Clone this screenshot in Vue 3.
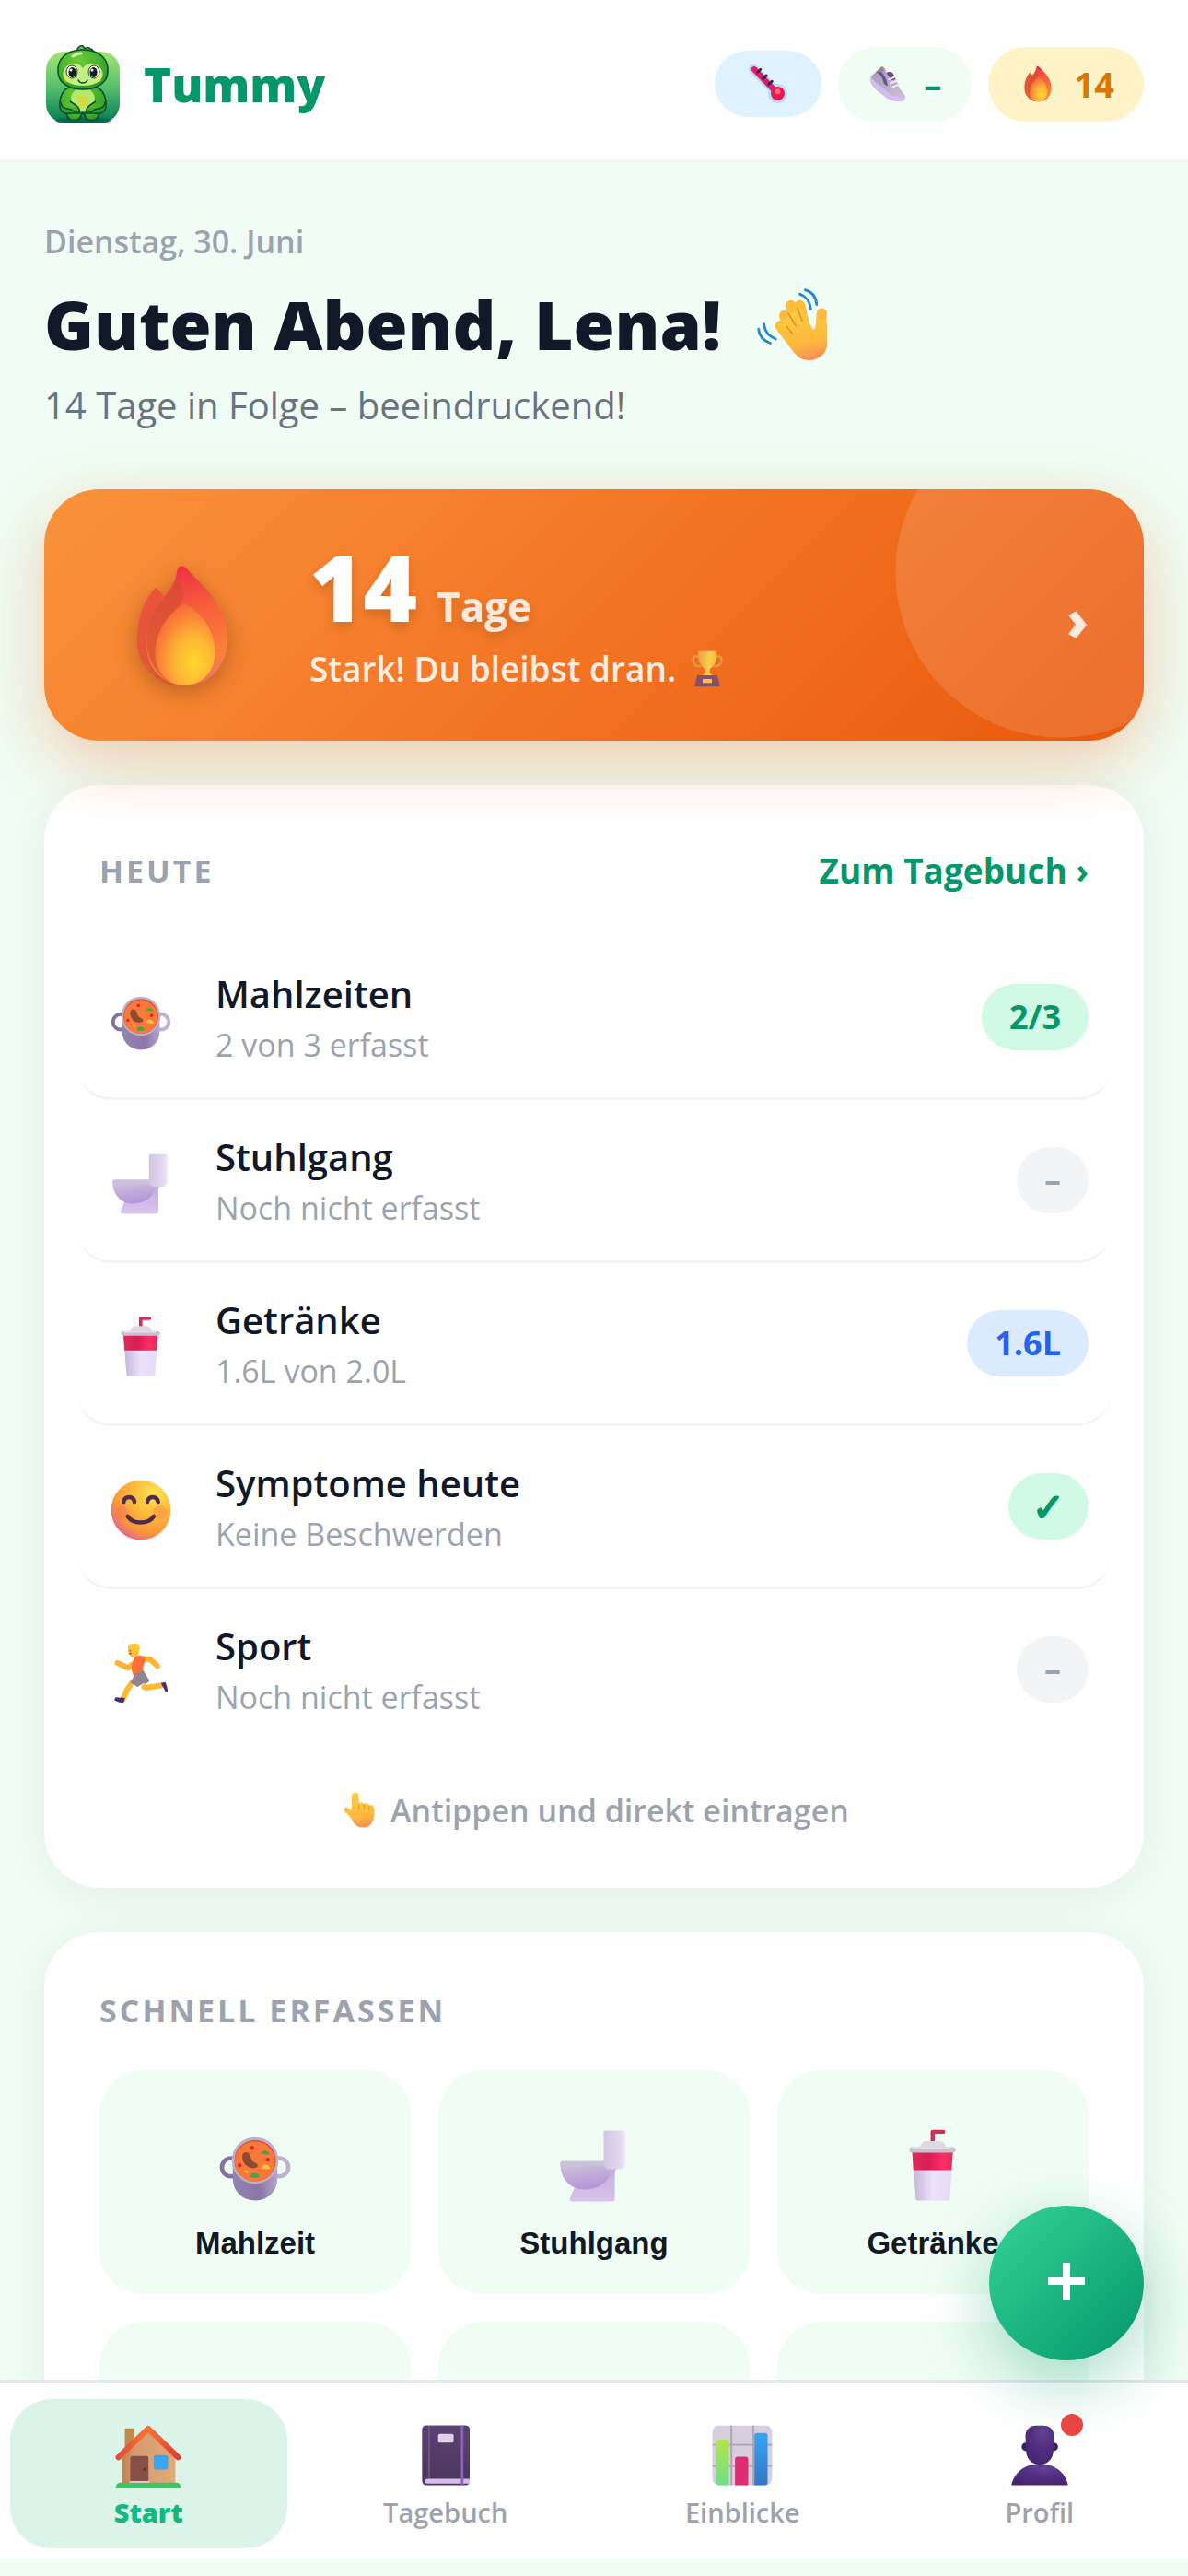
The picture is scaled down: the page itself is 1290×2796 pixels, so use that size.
<script setup>
import { ref } from 'vue'

const days = 14

const entries = [
  { icon: 'pot', title: 'Mahlzeiten', note: '2 von 3 erfasst', badge: '2/3', tone: 'good' },
  { icon: 'toilet', title: 'Stuhlgang', note: 'Noch nicht erfasst', badge: '–', tone: 'none' },
  { icon: 'cup', title: 'Getränke', note: '1.6L von 2.0L', badge: '1.6L', tone: 'info' },
  { icon: 'smile', title: 'Symptome heute', note: 'Keine Beschwerden', badge: '✓', tone: 'good check' },
  { icon: 'runner', title: 'Sport', note: 'Noch nicht erfasst', badge: '–', tone: 'none' },
]

const shortcuts = [
  { icon: 'pot', label: 'Mahlzeit' },
  { icon: 'toilet', label: 'Stuhlgang' },
  { icon: 'cup', label: 'Getränke' },
]
const moreShortcuts = [
  { icon: 'smile', label: 'Symptome' },
  { icon: 'runner', label: 'Sport' },
  { icon: 'book', label: 'Notiz' },
]

const tabs = [
  { icon: 'house', label: 'Start' },
  { icon: 'book', label: 'Tagebuch' },
  { icon: 'chart', label: 'Einblicke' },
  { icon: 'person', label: 'Profil', dot: true },
]
const active = ref('Start')
</script>

<template>
  <div class="app">
    <svg class="sprite" aria-hidden="true">
      <defs>
        <linearGradient id="g-logo" x1="0" y1="0" x2="0" y2="1"><stop offset="0" stop-color="#a4e676" /><stop offset=".5" stop-color="#57c06c" /><stop offset="1" stop-color="#047a55" /></linearGradient>
        <radialGradient id="g-mascot" cx=".4" cy=".25" r=".8"><stop offset="0" stop-color="#6ccb35" /><stop offset="1" stop-color="#279a26" /></radialGradient>
        <linearGradient id="g-flame" x1=".4" y1="0" x2=".6" y2="1"><stop offset="0" stop-color="#ef2f45" /><stop offset=".4" stop-color="#f8603c" /><stop offset=".8" stop-color="#f98238" /><stop offset="1" stop-color="#f2716a" /></linearGradient>
        <linearGradient id="g-tongue" x1="0" y1="0" x2="1" y2="1"><stop offset="0" stop-color="#f0503f" /><stop offset=".6" stop-color="#dc5a33" /><stop offset="1" stop-color="#d64a3c" /></linearGradient>
        <radialGradient id="g-core" cx=".65" cy=".72" r=".75"><stop offset="0" stop-color="#ffd62e" /><stop offset=".4" stop-color="#fdb833" /><stop offset="1" stop-color="#f7643a" /></radialGradient>
        <linearGradient id="g-skin" x1=".3" y1="0" x2=".5" y2="1"><stop offset="0" stop-color="#ffcf3d" /><stop offset=".7" stop-color="#fdb83e" /><stop offset="1" stop-color="#f79256" /></linearGradient>
        <radialGradient id="g-face" cx=".72" cy=".22" r=".85"><stop offset="0" stop-color="#ffe250" /><stop offset=".45" stop-color="#fdb83c" /><stop offset=".8" stop-color="#f8953b" /><stop offset="1" stop-color="#e8668d" /></radialGradient>
        <linearGradient id="g-pot"><stop offset="0" stop-color="#9384b0" /><stop offset=".6" stop-color="#8a76a8" /><stop offset="1" stop-color="#b5a6ca" /></linearGradient>
        <linearGradient id="g-tank"><stop offset="0" stop-color="#d3c6e4" /><stop offset=".6" stop-color="#dfd3ec" /><stop offset="1" stop-color="#efe7f7" /></linearGradient>
        <linearGradient id="g-bowl" x1="0" y1="0" x2=".3" y2="1"><stop offset="0" stop-color="#d2c8dd" /><stop offset="1" stop-color="#b497d8" /></linearGradient>
        <linearGradient id="g-base" x1="0" y1="0" x2="0" y2="1"><stop offset="0" stop-color="#c3acdf" /><stop offset="1" stop-color="#d8c4ec" /></linearGradient>
        <linearGradient id="g-cup"><stop offset="0" stop-color="#c3b3d8" /><stop offset=".5" stop-color="#ece2fa" /><stop offset="1" stop-color="#e6d9f6" /></linearGradient>
        <linearGradient id="g-band"><stop offset="0" stop-color="#dd2c5c" /><stop offset=".4" stop-color="#d81e53" /><stop offset=".75" stop-color="#fb2f65" /><stop offset="1" stop-color="#e42a5b" /></linearGradient>
        <linearGradient id="g-gold"><stop offset="0" stop-color="#eb9c45" /><stop offset=".6" stop-color="#fbd14d" /><stop offset="1" stop-color="#f4b63f" /></linearGradient>
        <linearGradient id="g-wall"><stop offset="0" stop-color="#bd8350" /><stop offset=".25" stop-color="#d79a70" /><stop offset="1" stop-color="#e0ac76" /></linearGradient>
        <linearGradient id="g-roof"><stop offset="0" stop-color="#e84a34" /><stop offset=".5" stop-color="#fb7432" /><stop offset="1" stop-color="#dd3d33" /></linearGradient>
        <linearGradient id="g-book" x1="0" y1="0" x2="0" y2="1"><stop offset="0" stop-color="#5b4273" /><stop offset="1" stop-color="#4b375c" /></linearGradient>
        <linearGradient id="g-b1" x1="0" y1="0" x2="0" y2="1"><stop offset="0" stop-color="#b5e34d" /><stop offset="1" stop-color="#6be08b" /></linearGradient>
        <linearGradient id="g-b3" x1="0" y1="0" x2="0" y2="1"><stop offset="0" stop-color="#35a5f4" /><stop offset="1" stop-color="#3576c4" /></linearGradient>
        <radialGradient id="g-person" cx=".6" cy=".2" r=".9"><stop offset="0" stop-color="#664393" /><stop offset=".4" stop-color="#533083" /><stop offset="1" stop-color="#42236b" /></radialGradient>
        <linearGradient id="g-shoe" x1="0" y1="0" x2="1" y2="1"><stop offset="0" stop-color="#a698b5" /><stop offset="1" stop-color="#cabfd8" /></linearGradient>
      </defs>

      <symbol id="i-logo" viewBox="0 0 84 84">
        <rect x="2" y="7" width="80" height="77" rx="20" fill="url(#g-logo)" />
        <ellipse cx="42" cy="82" rx="30" ry="4" fill="#036047" opacity=".7" />
        <g stroke="#0b4d2e" stroke-width="1.6" fill="url(#g-mascot)" stroke-linejoin="round">
          <path d="M35 8C35 3 39 0 42 1c1 1 2 2 2 3 2-2 5-2 6 0 3 0 4 3 2 6z" />
          <path d="M26 66c-3 6-2 13 3 15 4 1 9 1 10-3l3-5 3 5c1 4 6 4 10 3 5-2 6-9 3-15z" />
          <path d="M27 46c-7 2-11 12-10 21 1 7 7 8 12 7h26c5 1 11 0 12-7 1-9-3-19-10-21z" />
          <ellipse cx="42" cy="59" rx="13" ry="13" fill="#b4e86e" stroke="none" />
          <path d="M18 62c1 8 6 6 11 8 3 2 5 4 9 3 1-3-1-6-4-8l-6-4M66 62c-1 8-6 6-11 8-3 2-5 4-9 3-1-3 1-6 4-8l6-4" />
          <path d="M42 5C24 5 14 15 15 29c0 11 11 19 27 19s27-8 27-19C70 15 60 5 42 5z" />
        </g>
        <path d="M42 25c-3-5-9-6-14-4-6 2-9 9-7 14 3 6 11 9 21 9s18-3 21-9c2-5-1-12-7-14-5-2-11-1-14 4z" fill="#c2ee84" />
        <ellipse cx="30" cy="29" rx="6" ry="7" fill="#fff" stroke="#20432c" /><ellipse cx="54" cy="29" rx="6" ry="7" fill="#fff" stroke="#20432c" />
        <ellipse cx="30.500" cy="29.500" rx="4" ry="5.500" fill="#10201c" /><ellipse cx="53.500" cy="29.500" rx="4" ry="5.500" fill="#10201c" />
        <circle cx="29" cy="27" r="1.500" fill="#fff" /><circle cx="52" cy="27" r="1.500" fill="#fff" />
        <path d="M37 38c2 4 8 4 10 0" fill="none" stroke="#174a26" stroke-width="1.500" stroke-linecap="round" />
        <circle cx="25" cy="37" r="3" fill="#f3e24b" opacity=".6" /><circle cx="59" cy="37" r="3" fill="#f3e24b" opacity=".6" />
        <path d="M37 57h10M38 61h9M37 65h10" stroke="#e3d72c" stroke-width="2.500" stroke-linecap="round" />
        <path d="M31 12c3-2 6-3 9-3" stroke="#d9f7a8" stroke-width="3" stroke-linecap="round" fill="none" />
      </symbol>

      <symbol id="i-thermo" viewBox="0 0 32 32">
        <path d="M5.500 5.500L23 23" stroke="#b9d8fb" stroke-width="7" stroke-linecap="round" /><circle cx="23" cy="23" r="7" fill="#b9d8fb" />
        <path d="M6 5.500L22 22" stroke="#dd1c63" stroke-width="4.200" stroke-linecap="round" /><circle cx="23" cy="23" r="5" fill="#e8184f" /><circle cx="23" cy="21.500" r="2" fill="#fb6a7c" />
        <path d="M8.500 7.500l2-2M12.500 12l2.300-2M16.500 16.200l2.300-2" stroke="#37264b" stroke-width="2" stroke-linecap="round" />
      </symbol>

      <symbol id="i-shoe" viewBox="0 0 32 32">
        <path d="M11.500 2.300L2 11c-.5 4 3 8 7 11.500 6 4.500 9 7.500 15 7.500 4 0 6-1 6-3.500z" fill="#d3bdf0" />
        <path d="M11.500 2.300L3 10c1 4 6 6 10 10 5 5 9 7 17 6.500-1-3.500-4-5-5.500-8.500L21 9c-2-3-4-3-6-1.500-1-2-1-5-3.500-5.200z" fill="url(#g-shoe)" />
        <path d="M7 7c3 1 5 4 6 9l3 2C15.500 12 13 8 9 5z" fill="#6b5590" /><path d="M11.500 2.300L6 7l3.500-.5L13 6z" fill="#8a8a8e" />
        <path d="M15 7.500c2-2 5-1 6 2l1 3-3 .5z" fill="#644c8c" />
        <path d="M17 12.500l5-2M18 15.500l5-2M20 18.500l5-2" stroke="#f4eefb" stroke-width="1.300" stroke-linecap="round" />
      </symbol>

      <symbol id="i-flame" viewBox="0 0 32 32">
        <path d="M9.700 7.100C6.500 10.500 5.400 15 5.400 19.500 5.500 25 9 29 14 30l4-14-5.500-5c-.6-1.500-1.500-3-2.800-3.900z" fill="url(#g-tongue)" />
        <path d="M15.800 2c-.9 0-1 .8-1.200 2C14 8 9 11 7.700 17.500 6.600 24 10 29.800 16.400 30c6.200 0 10.200-4.500 10.200-11C26.600 11 20 6 17 2.600 16.600 2.200 16.200 2 15.800 2z" fill="url(#g-flame)" />
        <path d="M14.600 5C13 9 8.500 12 7.700 18c-.6 5 2 9.500 5.600 11.300C9.500 24 9.600 19 12 15.500c1.200-2 3-3.500 4-5.500C17 8 15.500 6 14.600 5z" fill="#cf4f31" opacity=".65" />
        <path d="M16.500 10.800C13.500 12.500 9.600 17 9.600 22.500c0 4.500 3 7.500 6.900 7.500s7.200-3 7.200-7.600c0-5-3-9.400-7.200-11.600z" fill="url(#g-core)" />
      </symbol>

      <symbol id="i-wave" viewBox="0 0 32 32">
        <g fill="none" stroke-linecap="round" stroke-width="4.200">
          <path d="M17 18L15 8.500M20.500 17L18.500 8.500M16 21l-3.500-8.500M17 24l-6-7.500" stroke="#fcbd3c" /><path d="M26.500 20l.6-8.500" stroke="#fdb93d" stroke-width="4" />
        </g>
        <path d="M13.600 12.500L19 9.500l4.500 8c.3.500.8.200 1-.4l.8-3.500c2 .5 3.900 1 3.900 2v8c0 3.500-3.300 6.200-7 6.200-3.300 0-5-1.600-7-4.400L9.500 18z" fill="url(#g-skin)" />
        <path d="M13.200 16.500l2.400 3M14 11.500l3 5M17.500 9.500l2 5" stroke="#e3942e" stroke-width=".6" stroke-linecap="round" fill="none" />
        <path d="M18.500 4c2.300.8 4 3 4.300 5.800M20.600 2.400c2.700.8 4.300 3 4.500 5.700M4.500 15.700c.3 2.900 2 4.900 4.600 5.900M2.400 17.700c.3 2.600 2 4.600 4.600 5.500" fill="none" stroke="#2489cf" stroke-width="1" stroke-linecap="round" />
      </symbol>

      <symbol id="i-trophy" viewBox="0 0 32 32">
        <path d="M9 6.500c-5-2-5 4-2.500 6.500C8 14 10 14 11 14M23 6.500c5-2 5 4 2.500 6.500C24 14 22 14 21 14" fill="none" stroke="#e39a3d" stroke-width="1.800" />
        <path d="M8.700 2h14.800c.5 6-1 11-5.500 14l-.3 3 2.800 2.600h-9L14.400 19l-.3-3C9.600 13 8.200 8 8.700 2z" fill="url(#g-gold)" />
        <path d="M8 21h16l2 9H6z" fill="#84506e" /><rect x="12.300" y="24" width="7.400" height="3" rx=".5" fill="#f7c251" />
      </symbol>

      <symbol id="i-pot" viewBox="0 0 32 32">
        <circle cx="6.500" cy="16.500" r="3.600" fill="none" stroke="#8273a3" stroke-width="1.700" /><circle cx="25.500" cy="16.500" r="3.600" fill="none" stroke="#bdb3ca" stroke-width="1.700" />
        <path d="M7.200 14h17.600v7c0 5-3.800 8.600-8.800 8.600S7.200 26 7.200 21z" fill="url(#g-pot)" />
        <circle cx="16" cy="13.800" r="9.200" fill="#bdb0ca" /><circle cx="16" cy="13.900" r="8.200" fill="#dc5439" /><circle cx="15.900" cy="14.200" r="7.900" fill="#fb7938" />
        <path d="M12 10.600c2-.2 2.100 1.600 2.700 3 .8 1.300 2.700 1.200 2.300 2.500-.8 1.300-3.800.8-5-.8-1.300-1.800-1.500-4.400 0-4.700z" fill="#8d4a31" />
        <path d="M16.200 10.900l2 .2c.4-1.500 3-1.700 3.600.4zM14 20.200c.2-2 3.500-2 3.700 0-.8.700-3 .7-3.700 0z" fill="#49a34d" />
        <path d="M18.500 17c0-2.300 3.200-2 3.500.3zM11.500 18l1.700-.2v1.300z" fill="#fcc63b" />
        <circle cx="14.800" cy="8.800" r=".8" fill="#cf2f2c" /><circle cx="21" cy="13.500" r=".8" fill="#cf2f2c" /><circle cx="9.900" cy="15.700" r=".8" fill="#cf2f2c" />
      </symbol>

      <symbol id="i-toilet" viewBox="0 0 32 32">
        <path d="M8.500 24l11-8h6.500c-1.500 1-1.800 2-1.800 3.500V29c0 .6-.4 1-1 1H7.400c-.8 0-1.200-.8-.8-1.500z" fill="url(#g-base)" />
        <path d="M2.700 15.200c0-.7.400-1.100 1-1.100H20l3 4c-1.500 4.500-5.500 7.200-10.500 7.200-5.600 0-9.800-4-9.800-10.100z" fill="url(#g-bowl)" />
        <path d="M3.500 14.100H20v2H2.900c-.5-1-.2-2 .6-2z" fill="#cbc1d8" />
        <path d="M19.800 2.700c0-.4.300-.7.700-.7h7.300c.4 0 .7.300.7.700v12c0 1.600-1 2.600-2.500 2.600h-3.700c-1.500 0-2.500-1-2.500-2.500z" fill="url(#g-tank)" />
      </symbol>

      <symbol id="i-cup" viewBox="0 0 32 32">
        <path d="M15.900 8V2.500h4.200" fill="none" stroke="#d22d55" stroke-width="1.600" stroke-linejoin="round" stroke-linecap="round" />
        <path d="M7.800 10h16.100l-1.200 18.800c0 .5-.4.800-.8.800H10c-.5 0-.8-.3-.8-.8z" fill="url(#g-cup)" />
        <path d="M7.800 10.300h16.100l-.5 7.300H8.300z" fill="url(#g-band)" />
        <path d="M10.800 9c.3-1.800 1.300-2.700 2.700-2.800h5c1.400.1 2.400 1 2.700 2.800z" fill="#dedbe0" />
        <rect x="6.700" y="8.500" width="18.300" height="2.200" rx="1.100" fill="#c9c1ce" /><path d="M8 8.900h15" stroke="#e4e1e6" stroke-width=".8" />
      </symbol>

      <symbol id="i-smile" viewBox="0 0 32 32">
        <circle cx="16" cy="16" r="14" fill="url(#g-face)" />
        <circle cx="6.800" cy="17" r="3.200" fill="#f56f5e" opacity=".4" /><circle cx="25" cy="17" r="3.200" fill="#f88a50" opacity=".5" />
        <path d="M7.900 12.200c.6-3 4.500-3 5.100 0M19 12.200c.6-3 4.500-3 5.100 0M9.800 19c2.600 3.800 9.600 3.800 12.200 0" fill="none" stroke="#4d2c4a" stroke-width="1.900" stroke-linecap="round" />
      </symbol>

      <symbol id="i-runner" viewBox="0 0 32 32">
        <path d="M11.800 20.500l-2.200 3.200-2 4.500M17.500 22.500c2 1 4.500-.6 8-.7" stroke="#fdb92f" stroke-width="2.600" stroke-linecap="round" stroke-linejoin="round" fill="none" />
        <path d="M4 27.300l4.600.4-.8 2.300c-1.500 0-3-.6-4.300-1.200zM25.400 20.600l2-.4c.8 1.300 1.100 3 1.200 4.600l-1 .1z" fill="#47317c" />
        <path d="M12.500 11.500l-2.500 2L5 11.200M17.500 9.200l3 .4 3.200 3" stroke="#fdb433" stroke-width="2.600" stroke-linecap="round" stroke-linejoin="round" fill="none" />
        <path d="M13 8.500c1.500-1.200 4-1 5 .5.500 1-1.300 3-1 7L13 18c-1-2-1.800-4-1.300-6z" fill="#fb7138" />
        <path d="M17 14.500l3 5c-.5 1.300-1.700 1.700-2.900 1.400L14.500 22.500l-3.400-2 1.700-3.500z" fill="#8e8494" />
        <path d="M10 3.500c.5-1.800 5-2 5.300 0 .2 2.500-.3 4.500-2.500 5-2 0-2.800-1.500-2.900-3z" fill="#fcc037" /><path d="M10 4c1-2.300 5-2.500 5.300 0 0 1 0 2-.5 3-1-2-2-3-4.800-3z" fill="#fdcc3a" /><path d="M10.500 6.800h1M10.600 5.500h.6" stroke="#a5513a" stroke-width=".6" />
      </symbol>

      <symbol id="i-point" viewBox="0 0 32 32">
        <path d="M10 4.500c0-3.400 5.800-3.400 5.800 0v6.300c1.500-1.500 3.600-1 4.200.3 1.500-1 3.300-.4 4 .9 2-.8 4 .6 4 3 0 8-1.500 14.500-9 14.500-5 0-7.500-3.500-9.500-7.500L4.400 16.500c-1-1.600.5-3.300 2.200-2.700L10 16z" fill="url(#g-skin)" />
        <path d="M15.800 11v4M20 11.500V15M24 12.500v3" stroke="#e39a2e" stroke-width=".8" stroke-linecap="round" />
      </symbol>

      <symbol id="i-house" viewBox="0 0 32 32">
        <rect x="5" y="3.300" width="4.400" height="10" rx=".4" fill="#c08a4a" />
        <path d="M3.700 15L16 5l12.700 10v14H3.700z" fill="url(#g-wall)" />
        <rect x="7.500" y="16.300" width="8.600" height="12.200" rx="1" fill="#855048" /><circle cx="14.200" cy="22.600" r=".7" fill="#5d3530" />
        <rect x="18.500" y="15.900" width="6.800" height="6.800" rx="1.200" fill="#37a5ef" />
        <path d="M2 17L16 3.500 30 17" fill="none" stroke="url(#g-roof)" stroke-width="2.700" stroke-linecap="round" stroke-linejoin="round" />
        <path d="M.7 31.400c0-1.600.9-2.500 2.300-2.500h26c1.400 0 2.300.9 2.300 2.500z" fill="#40c565" /><path d="M7.300 28.500h9.400" stroke="#d9cbd8" stroke-width=".8" />
      </symbol>

      <symbol id="i-book" viewBox="0 0 32 32">
        <rect x="5" y="2" width="22.200" height="28" rx="1.800" fill="#4b2f71" />
        <path d="M6.800 2h18.600c1 0 1.800.8 1.800 1.800V27H7c-1 0-2 .8-2 1.800v-25C5 2.800 5.800 2 6.800 2z" fill="url(#g-book)" />
        <path d="M27.200 27H7.500c-2 0-2 2.300 0 2.300h19.700z" fill="#d3bfe6" /><path d="M8.200 2.200v24.500" stroke="#7b668c" stroke-width=".5" />
        <rect x="12.400" y="5.900" width="7.300" height="4.200" rx=".8" fill="#e0d0ea" /><path d="M23.700 2v28" stroke="#8766b6" stroke-width="1.200" />
      </symbol>

      <symbol id="i-chart" viewBox="0 0 32 32">
        <rect x="2" y="2" width="28" height="28" rx="3" fill="#d6cfdd" />
        <path d="M10.900 2v28M21.200 2v28M2 11.100h28M2 21h28" stroke="#aba3b4" stroke-width=".8" />
        <path d="M3.600 10c0-.8.500-1.300 1.200-1.300h3.700c.8 0 1.200.5 1.200 1.300v20H5c-.8-.1-1.400-.6-1.400-1.200z" fill="url(#g-b1)" />
        <path d="M12.600 18c0-.8.500-1.300 1.200-1.300h3.800c.8 0 1.200.5 1.200 1.300v12h-6.200z" fill="#de2b71" />
        <path d="M21.700 6.800c0-.8.500-1.300 1.200-1.300h3.800c.8 0 1.200.5 1.200 1.300V29c0 .6-.5 1-1.200 1h-5z" fill="url(#g-b3)" />
      </symbol>

      <symbol id="i-person" viewBox="0 0 32 32">
        <circle cx="9.500" cy="12" r="2" fill="#3b2162" /><circle cx="22.600" cy="12" r="2" fill="#3b2162" />
        <path d="M2.700 30C4 24 9 20 16 20s12 4 13.300 10z" fill="url(#g-person)" />
        <path d="M9.300 7c0-3 2-5 5-5h3.400c3 0 5 2 5 5l-.3 7c-.2 4-3 6.300-6.400 6.300S9.800 18 9.600 14z" fill="url(#g-person)" />
      </symbol>
    </svg>

    <header class="topbar">
      <div class="brand">
        <svg class="logo" aria-hidden="true"><use href="#i-logo" /></svg>
        <span class="brand-name">Tummy</span>
      </div>
      <div class="chips">
        <button class="chip chip-temp" type="button" aria-label="Temperatur"><svg class="ico-temp" aria-hidden="true"><use href="#i-thermo" /></svg></button>
        <button class="chip chip-steps" type="button"><svg class="ico-sm" aria-hidden="true"><use href="#i-shoe" /></svg><span>–</span></button>
        <button class="chip chip-streak" type="button"><svg class="ico-sm" aria-hidden="true"><use href="#i-flame" /></svg><span>{{ days }}</span></button>
      </div>
    </header>

    <main class="content">
      <section class="greeting">
        <p class="date">Dienstag, 30. Juni</p>
        <h1 class="hello">Guten Abend, Lena! <svg class="ico-wave" aria-hidden="true"><use href="#i-wave" /></svg></h1>
        <p class="lead">{{ days }} Tage in Folge – beeindruckend!</p>
      </section>

      <a class="streak" href="#streak">
        <span class="streak-icon"><svg class="ico-xl" aria-hidden="true"><use href="#i-flame" /></svg></span>
        <span class="streak-body">
          <span class="streak-count"><strong>{{ days }}</strong><span class="unit">Tage</span></span>
          <span class="streak-note">Stark! Du bleibst dran. <svg class="ico-sm" aria-hidden="true"><use href="#i-trophy" /></svg></span>
        </span>
        <span class="streak-arrow">›</span>
      </a>

      <section class="card">
        <div class="card-head">
          <h2 class="card-title">HEUTE</h2>
          <a class="card-link" href="#tagebuch">Zum Tagebuch ›</a>
        </div>
        <ul class="rows">
          <li v-for="e in entries" :key="e.title">
            <button class="row" type="button">
              <span class="row-icon"><svg class="ico-md" aria-hidden="true"><use :href="'#i-' + e.icon" /></svg></span>
              <span class="row-text"><span class="row-title">{{ e.title }}</span><span class="row-note">{{ e.note }}</span></span>
              <span class="badge" :class="e.tone">{{ e.badge }}</span>
            </button>
          </li>
        </ul>
        <p class="hint"><svg class="ico-sm" aria-hidden="true"><use href="#i-point" /></svg>Antippen und direkt eintragen</p>
      </section>

      <section class="card">
        <div class="card-head"><h2 class="card-title">SCHNELL ERFASSEN</h2></div>
        <div class="tiles">
          <button v-for="s in shortcuts" :key="s.label" class="tile" type="button">
            <svg class="ico-lg" aria-hidden="true"><use :href="'#i-' + s.icon" /></svg>
            <span>{{ s.label }}</span>
          </button>
          <button v-for="s in moreShortcuts" :key="s.label" class="tile" type="button" :aria-label="s.label">
            <svg class="ico-lg" aria-hidden="true"><use :href="'#i-' + s.icon" /></svg>
          </button>
        </div>
      </section>
    </main>

    <nav class="tabbar">
      <button v-for="t in tabs" :key="t.label" class="tab" :class="{ active: active === t.label }" type="button" @click="active = t.label">
        <span class="tab-icon"><svg class="ico-md" aria-hidden="true"><use :href="'#i-' + t.icon" /></svg><span v-if="t.dot" class="dot"></span></span>
        <span class="tab-label">{{ t.label }}</span>
      </button>
    </nav>

    <button class="fab" type="button" aria-label="Neuer Eintrag">
      <svg class="plus" viewBox="0 0 40 40" aria-hidden="true"><path d="M20 0v40M0 20h40" stroke="#fff" stroke-width="8" /></svg>
    </button>
  </div>
</template>

<style>
body { background: #f0fdf4; }
</style>

<style scoped>
* { box-sizing: border-box; }
.app {
  height: 100vh;
  display: flex;
  flex-direction: column;
  padding-bottom: 18px;
  background: #f0fdf4;
  color: #111827;
  font-family: "Open Sans", "Noto Sans", sans-serif;
}
.sprite { position: absolute; width: 0; height: 0; }
p, h1, h2, ul { margin: 0; padding: 0; }
ul { list-style: none; }
button { border: 0; background: none; padding: 0; color: inherit; font: inherit; }
a { text-decoration: none; }
svg { display: block; flex: none; }
.ico-sm { width: 44px; height: 44px; }
.ico-temp { width: 48px; height: 48px; }
.ico-md { width: 74px; height: 74px; }
.ico-lg { width: 88px; height: 88px; }
.ico-xl { width: 148px; height: 148px; filter: drop-shadow(0 6px 12px rgba(0, 0, 0, .25)); }
.ico-wave { width: 89px; height: 89px; }

.topbar {
  flex: none;
  display: flex;
  align-items: center;
  justify-content: space-between;
  height: 176px;
  padding: 9px 48px 0;
  background: #fff;
  border-bottom: 3px solid #f1f7f4;
}
.brand { display: flex; align-items: center; gap: 24px; }
.logo { width: 84px; height: 84px; }
.brand-name { font-size: 51px; line-height: 72px; font-weight: 800; color: #059669; }
.chips { display: flex; align-items: center; gap: 18px; }
.chip { display: flex; align-items: center; height: 81px; border-radius: 42px; font-size: 38px; font-weight: 700; }
.chip-temp { height: 72px; padding: 0 34px; background: #e0f2fe; }
.chip-steps { gap: 18px; padding: 0 32px; background: #f0fdf4; color: #059669; }
.chip-streak { gap: 18px; padding: 0 32px; background: #fef3c7; color: #d97706; }

.content { flex: 1; min-height: 0; overflow: hidden; padding: 62px 48px 0; }
.date { font-size: 34px; line-height: 48px; font-weight: 600; color: #9ca3af; }
.hello { display: flex; align-items: center; gap: 34px; margin-top: 18px; font-size: 73px; line-height: 96px; font-weight: 800; }
.lead { margin-top: 10px; font-size: 40px; line-height: 60px; color: #6b7280; }

.streak {
  position: relative;
  z-index: 1;
  display: flex;
  align-items: center;
  gap: 48px;
  margin-top: 61px;
  padding: 51px 60px;
  border-radius: 60px;
  background: linear-gradient(135deg, #fb923c, #ea580c);
  box-shadow: 0 24px 72px rgba(234, 88, 12, .3);
  color: #fff;
}
.streak::before {
  content: "";
  position: absolute;
  inset: 0;
  border-radius: 60px;
  background: radial-gradient(circle 180px at calc(100% - 90px) 90px, rgba(255, 255, 255, .13) 179px, transparent 180px);
}
.streak-icon { display: flex; justify-content: center; align-self: flex-end; width: 180px; }
.streak-body { flex: 1; display: flex; flex-direction: column; gap: 9px; }
.streak-count { display: flex; align-items: baseline; gap: 21px; text-shadow: 0 6px 12px rgba(0, 0, 0, .15); }
.streak-count strong { font-size: 100px; line-height: 108px; font-weight: 800; }
.unit { font-size: 44px; line-height: 60px; font-weight: 700; color: rgba(255, 255, 255, .87); }
.streak-note { display: flex; align-items: center; gap: 12px; font-size: 37px; line-height: 54px; font-weight: 600; color: rgba(255, 255, 255, .9); }
.streak-arrow { padding-top: 9px; font-size: 60px; line-height: 72px; font-weight: 800; color: rgba(255, 255, 255, .85); }

.card { margin-top: 48px; padding: 60px; border-radius: 60px; background: #fff; box-shadow: 0 6px 48px rgba(0, 0, 0, .06); }
.card-head { display: flex; align-items: center; justify-content: space-between; margin-bottom: 39px; }
.card-title { font-size: 34px; line-height: 51px; font-weight: 700; letter-spacing: 3px; color: #9ca3af; }
.card-link { font-size: 37px; line-height: 66px; font-weight: 700; color: #059669; }
.row {
  display: flex;
  align-items: center;
  gap: 36px;
  width: calc(100% + 48px);
  margin: 0 -24px;
  padding: 33px 24px;
  border-bottom: 3px solid #f3f4f6;
  border-radius: 36px;
  text-align: left;
}
li:last-child .row { border-bottom: 0; }
.row-icon { display: flex; justify-content: center; width: 90px; padding-top: 8px; }
.row-text { flex: 1; display: flex; flex-direction: column; gap: 3px; }
.row-title { font-size: 40px; line-height: 57px; font-weight: 600; }
.row-note { font-size: 34px; line-height: 48px; color: #9ca3af; }
.badge { height: 72px; padding: 0 30px; border-radius: 36px; font-size: 36px; line-height: 72px; font-weight: 700; font-family: "Open Sans", "DejaVu Sans", sans-serif; }
.good { background: #d1fae5; color: #059669; }
.none { background: #f3f4f6; color: #9ca3af; }
.info { background: #dbeafe; color: #2563eb; }
.check { padding: 0 26px; font-size: 42px; -webkit-text-stroke: 2px #059669; }
.hint { display: flex; justify-content: center; align-items: center; gap: 12px; margin-top: 42px; font-size: 34px; line-height: 48px; font-weight: 600; color: #9ca3af; }

.tiles { display: grid; grid-template-columns: repeat(3, 1fr); grid-auto-rows: 1fr; gap: 30px; }
.tile {
  display: flex;
  flex-direction: column;
  align-items: center;
  gap: 20px;
  padding: 60px 12px 36px;
  border-radius: 48px;
  background: #f0fdf4;
  font-family: "Liberation Sans", Arial, sans-serif;
  font-size: 33px;
  line-height: 39px;
  font-weight: 700;
}

.tabbar { flex: none; display: flex; padding: 18px 0 12px; background: #fff; border-top: 3px solid #e5e7eb; }
.tab { flex: 1; display: flex; flex-direction: column; align-items: center; gap: 4px; margin: 0 11px; padding: 24px 0 18px; border-radius: 45px; color: #9ca3af; }
.tab.active { background: #daf4ea; color: #10b981; }
.tab-label { font-size: 29px; line-height: 42px; font-weight: 600; }
.tab.active .tab-label { font-weight: 800; }
.tab-icon { position: relative; }
.dot { position: absolute; top: -8px; right: -10px; width: 24px; height: 24px; border-radius: 50%; background: #ef4444; }

.fab {
  position: fixed;
  right: 48px;
  bottom: 234px;
  z-index: 2;
  display: flex;
  align-items: center;
  justify-content: center;
  width: 168px;
  height: 168px;
  padding-bottom: 4px;
  border-radius: 50%;
  background: linear-gradient(135deg, #34d399, #059669);
  box-shadow: 0 24px 72px rgba(5, 150, 105, .35);
}
.plus { width: 40px; height: 40px; }
</style>
